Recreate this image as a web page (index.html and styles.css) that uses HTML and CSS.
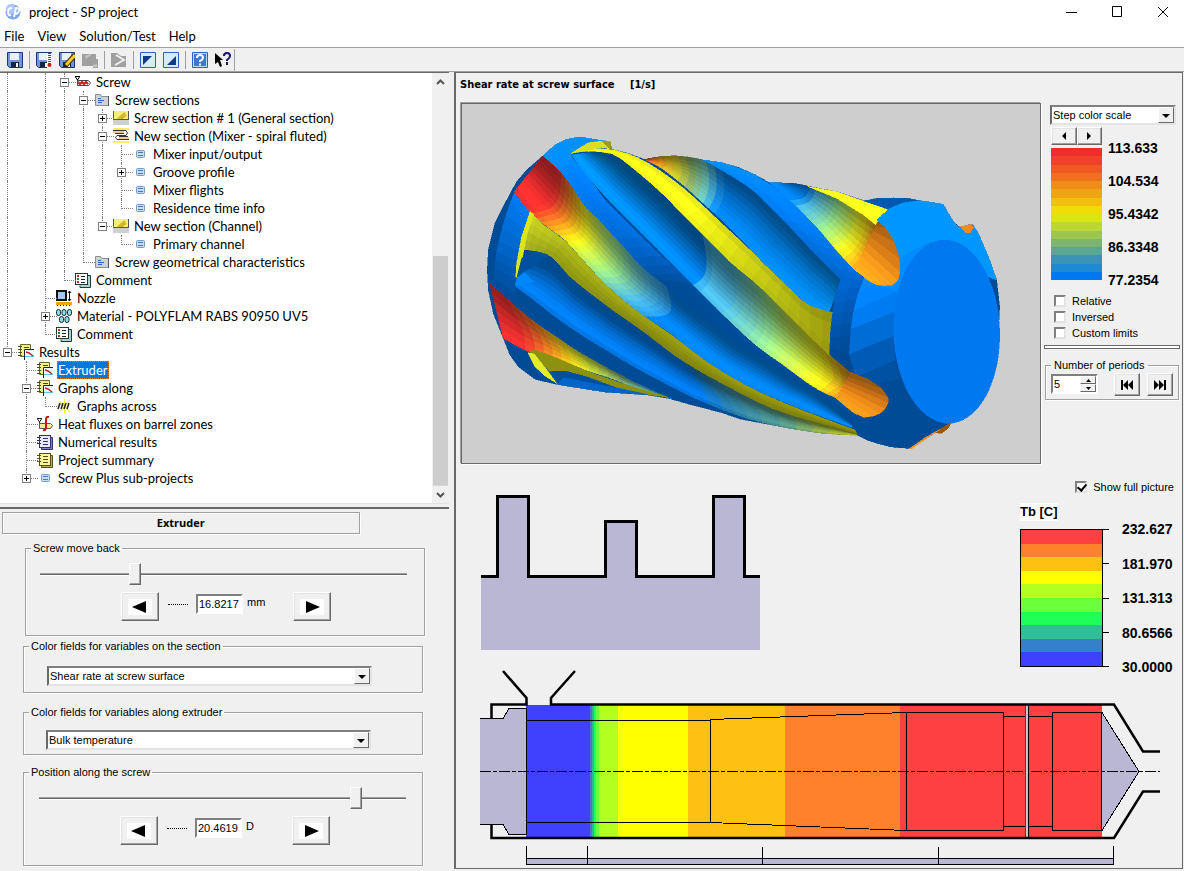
FILE: index.html
```html
<!DOCTYPE html>
<html lang="en">
<head>
<meta charset="utf-8">
<title>project - SP project</title>
<link rel="stylesheet" href="styles.css">
</head>
<body>
<svg class="defs" aria-hidden="true">
  <symbol id="i-screw" viewBox="0 0 16 16"><path d="M0 2.500h5M.5 3l2 3 2-3M2.500 5v6" fill="none" stroke="#000"/><path d="M2.500 6.500h11l2 2.500-2 2.500h-11z" fill="#fff" stroke="#444"/><path d="M3 8l2 2 2-2 2 2 2-2 2 2" fill="none" stroke="#d01818" stroke-width="2"/></symbol>
  <symbol id="i-folder" viewBox="0 0 16 16"><path d="M1.500 2.500h5l1 2h7v9h-13z" fill="#cfd2d6" stroke="#8b8f96"/><path d="M4 6.500h3M4 8.500h6M4 10.500h4" stroke="#2a62c8"/><path d="M14.500 4v10" stroke="#555"/></symbol>
  <symbol id="i-channel" viewBox="0 0 16 16"><path d="M0 10h16v5H0z" fill="#cfcfcf"/><path d="M1 1h14v8H1z" fill="#f4ee72"/><path d="M5 9l7-6M8 9l5-4" stroke="#d2b42a" stroke-width="2"/><path d="M0 9.500h16M.5 1v8M15.500 1v8" stroke="#555" fill="none"/></symbol>
  <symbol id="i-mixer" viewBox="0 0 16 16"><path d="M0 1h16M0 14h16" stroke="#ffee66" stroke-width="2"/><path d="M0 4h11M6 10h10" stroke="#f4c8a0" stroke-width="2"/><path d="M0 2.500h13q3 2.500 0 5H4q-3 2 0 4h12M2 5.500h9M6 8.500h9" fill="none" stroke="#333"/></symbol>
  <symbol id="i-leaf" viewBox="0 0 16 16"><rect x="4.500" y="4.500" width="8" height="7" rx="1" fill="#c5dcf5" stroke="#7d9cbd"/><path d="M6 6.500h5M6 9.500h5" stroke="#4a7ab5"/></symbol>
  <symbol id="i-comment" viewBox="0 0 16 16"><path d="M11 3.500h4.500v12H5v-2" fill="#a9d4cc" stroke="#203838"/><rect x=".5" y="1.500" width="12" height="11" fill="#fff" stroke="#203838"/><path d="M2 4h2M2 10h2" stroke="#c03020" stroke-width="2"/><path d="M2 7h2" stroke="#208030" stroke-width="2"/><path d="M6 4.500h4M6 7.500h4M6 10.500h4" stroke="#222"/></symbol>
  <symbol id="i-nozzle" viewBox="0 0 16 16"><rect x="1" y="1" width="9" height="9" fill="#a8c8f4" stroke="#111" stroke-width="2"/><path d="M13.500 1v10M12 3l1.500-2L15 3M12 9l1.500 2L15 9" fill="none" stroke="#111"/><path d="M0 13.500h16" stroke="#e8a800" stroke-width="3"/><path d="M1 15.500h14" stroke="#222" stroke-dasharray="1 2"/></symbol>
  <symbol id="i-material" viewBox="0 0 16 16"><g fill="#8fe0e4" stroke="#123"><rect x=".5" y="1.500" width="4" height="6" rx="2"/><rect x="6" y="1.500" width="4" height="6" rx="2"/><rect x="11.500" y="1.500" width="4" height="6" rx="2"/><rect x="3.500" y="8.500" width="4" height="6" rx="2"/><rect x="9" y="8.500" width="4" height="6" rx="2"/></g></symbol>
  <symbol id="i-results" viewBox="0 0 16 16"><path d="M2.500.5h10v12h-10z" fill="#f6f08a" stroke="#6a6828"/><path d="M0 2.500h4M0 5.500h4M0 8.500h4M0 11.500h4M6 3.500h5" stroke="#4a4820"/><path d="M6 5h10v11H6z" fill="#e8fbff"/><path d="M6.500 16V5.500H16" fill="none" stroke="#222"/><path d="M7 12.500h9" stroke="#60c8e0"/><path d="M8 8l3 1 4 3" fill="none" stroke="#c02020" stroke-width="1.500"/></symbol>
  <symbol id="i-across" viewBox="0 0 16 16"><path d="M3 15L14 2M3 3l11 11M8.500 1v14" stroke="#f4ee30"/><path d="M2 11l2-6M5 11l2-6M8 11l2-6M11 11l2-6" stroke="#222" stroke-width="1.500"/></symbol>
  <symbol id="i-heat" viewBox="0 0 16 16"><path d="M0 2.500h5M.5 3l2 3 2-3M2.500 6v6" fill="none" stroke="#222"/><path d="M2.500 7.500h11l2 2-2 3h-11z" fill="#f0ea9a" stroke="#555"/><path d="M12 1q-3-1-3 3v7q0 4-3 3" fill="none" stroke="#d01010" stroke-width="2"/></symbol>
  <symbol id="i-note-b" viewBox="0 0 16 16"><path d="M4.500 3.500h11v12h-11z" fill="#8080c8" stroke="#303070"/><rect x="2.500" y="1.500" width="11" height="12" fill="#e8e8ff" stroke="#303070"/><path d="M6 4.500h5M6 7.500h5M6 10.500h5M0 3.500h4M0 6.500h4M0 9.500h4" stroke="#303070"/></symbol>
  <symbol id="i-note-y" viewBox="0 0 16 16"><path d="M4.500 3.500h11v12h-11z" fill="#b8b048" stroke="#55501a"/><rect x="2.500" y="1.500" width="11" height="12" fill="#fbf69a" stroke="#55501a"/><path d="M6 4.500h5M6 7.500h5M6 10.500h5M0 3.500h4M0 6.500h4M0 9.500h4" stroke="#55501a"/></symbol>
  <symbol id="i-disk" viewBox="0 0 16 16"><path d="M.5.5h15v15h-13l-2-2z" fill="#7294d8" stroke="#1c3478"/><path d="M3 1h9v7H3z" fill="#e9effc"/><path d="M4 10h8v5H4z" fill="#15234c"/><path d="M9 11h2v4H9z" fill="#fff"/></symbol>
</svg>

<header class="titlebar">
  <svg class="logo" viewBox="0 0 16 16"><circle cx="8" cy="8" r="7.500" fill="#7fa6ee"/><circle cx="6" cy="5" r="5" fill="#a9c6f8"/><path d="M7 4Q3 4 3 8t3 3M9 13l2-9q4 0 3 3t-4 3" fill="none" stroke="#fff" stroke-width="2"/></svg>
  <h1 class="app-title">project - SP project</h1>
  <div class="win-buttons">
    <button aria-label="Minimize"><svg viewBox="0 0 12 12"><path d="M1 6.500h11" stroke="#000"/></svg></button>
    <button aria-label="Maximize"><svg viewBox="0 0 12 12"><path d="M1.500.5h9v10h-9z" fill="none" stroke="#000"/></svg></button>
    <button aria-label="Close"><svg viewBox="0 0 12 12"><path d="M1 1l10 10M11 1L1 11" stroke="#000"/></svg></button>
  </div>
</header>
<nav class="menubar"><button>File</button><button>View</button><button>Solution/Test</button><button>Help</button></nav>
<div class="toolbar">
  <button aria-label="Save"><svg viewBox="0 0 16 16"><use href="#i-disk"/></svg></button>
  <i class="sep"></i>
  <button aria-label="Save temperature"><svg viewBox="0 0 16 16"><use href="#i-disk"/><path d="M11 1h5v15h-5z" fill="#fff"/><path d="M13.500 1v11" stroke="#c02020" stroke-dasharray="1 1" stroke-width="3"/><circle cx="13.500" cy="13" r="2" fill="#d01818"/></svg></button>
  <button aria-label="Save and edit"><svg viewBox="0 0 16 16"><use href="#i-disk"/><path d="M6 14L16 3" stroke="#3a2a00" stroke-width="5"/><path d="M7 13L16 3" stroke="#f6cc20" stroke-width="3"/></svg></button>
  <button aria-label="Export" disabled><svg viewBox="0 0 16 16"><path d="M0 2h14v5h2v9h-5v-2H0z" fill="#a0a0a0"/><path d="M3 4l5-2h2l-6 5zM11 13l4-1v3h-4z" fill="#c4c4c4"/></svg></button>
  <i class="sep"></i>
  <button aria-label="Run" disabled><svg viewBox="0 0 16 16"><path d="M0 1h6l4 3h5v11H0z" fill="#a0a0a0"/><path d="M5 3l8 5-9 5" fill="none" stroke="#f0f0f0" stroke-width="2"/></svg></button>
  <i class="sep"></i>
  <button aria-label="Back view"><svg viewBox="0 0 16 16"><path d="M.5.5h15v15H.5z" fill="#d4ecff" stroke="#2c62c4"/><path d="M3 4h9L3 13z" fill="#123a8c"/></svg></button>
  <button aria-label="Front view"><svg viewBox="0 0 16 16"><path d="M.5.5h15v15H.5z" fill="#d4ecff" stroke="#2c62c4"/><path d="M13 4v9H4z" fill="#123a8c"/></svg></button>
  <i class="sep"></i>
  <button aria-label="Help"><svg viewBox="0 0 16 16"><path d="M.5.5h15v15H.5z" fill="#bcdcff" stroke="#2c62c4"/><path d="M2 2h12v12H2z" fill="#3c78d0"/><path d="M5 6q0-3 3-3t3 3q0 1.500-3 3v1M8 11.500v2" fill="none" stroke="#fff" stroke-width="2"/></svg></button>
  <button aria-label="Context help"><svg viewBox="0 0 16 16"><path d="M0 1l8 7H5l2 6-2 1-2-5-3 2z" fill="#000"/><path d="M9 4q0-3 3-3t3 3q0 2-3 4v1M12 10v3" fill="none" stroke="#16166c" stroke-width="2"/></svg></button>
  <i class="sep end"></i>
</div>

<main class="main">
  <section class="left">
    <div class="tree-box">
      <div class="tree" role="tree">
        <div class="row"><i class="v"></i><i></i><i class="v"></i><i class="t"><button class="minus" aria-label="Collapse"></button></i><svg><use href="#i-screw"/></svg><span>Screw</span></div>
        <div class="row"><i class="v"></i><i></i><i class="v"></i><i class="v"></i><i class="t"><button class="minus" aria-label="Collapse"></button></i><svg><use href="#i-folder"/></svg><span>Screw sections</span></div>
        <div class="row"><i class="v"></i><i></i><i class="v"></i><i class="v"></i><i class="v"></i><i class="t"><button class="plus" aria-label="Expand"></button></i><svg><use href="#i-channel"/></svg><span>Screw section # 1 (General section)</span></div>
        <div class="row"><i class="v"></i><i></i><i class="v"></i><i class="v"></i><i class="v"></i><i class="t"><button class="minus" aria-label="Collapse"></button></i><svg><use href="#i-mixer"/></svg><span>New section (Mixer - spiral fluted)</span></div>
        <div class="row"><i class="v"></i><i></i><i class="v"></i><i class="v"></i><i class="v"></i><i class="v"></i><i class="t"></i><svg><use href="#i-leaf"/></svg><span>Mixer input/output</span></div>
        <div class="row"><i class="v"></i><i></i><i class="v"></i><i class="v"></i><i class="v"></i><i class="v"></i><i class="t"><button class="plus" aria-label="Expand"></button></i><svg><use href="#i-leaf"/></svg><span>Groove profile</span></div>
        <div class="row"><i class="v"></i><i></i><i class="v"></i><i class="v"></i><i class="v"></i><i class="v"></i><i class="t"></i><svg><use href="#i-leaf"/></svg><span>Mixer flights</span></div>
        <div class="row"><i class="v"></i><i></i><i class="v"></i><i class="v"></i><i class="v"></i><i class="v"></i><i class="l"></i><svg><use href="#i-leaf"/></svg><span>Residence time info</span></div>
        <div class="row"><i class="v"></i><i></i><i class="v"></i><i class="v"></i><i class="v"></i><i class="l"><button class="minus" aria-label="Collapse"></button></i><svg><use href="#i-channel"/></svg><span>New section (Channel)</span></div>
        <div class="row"><i class="v"></i><i></i><i class="v"></i><i class="v"></i><i class="v"></i><i></i><i class="l"></i><svg><use href="#i-leaf"/></svg><span>Primary channel</span></div>
        <div class="row"><i class="v"></i><i></i><i class="v"></i><i class="v"></i><i class="l"></i><svg><use href="#i-folder"/></svg><span>Screw geometrical characteristics</span></div>
        <div class="row"><i class="v"></i><i></i><i class="v"></i><i class="l"></i><svg><use href="#i-comment"/></svg><span>Comment</span></div>
        <div class="row"><i class="v"></i><i></i><i class="t"></i><svg><use href="#i-nozzle"/></svg><span>Nozzle</span></div>
        <div class="row"><i class="v"></i><i></i><i class="t"><button class="plus" aria-label="Expand"></button></i><svg><use href="#i-material"/></svg><span>Material - POLYFLAM RABS 90950 UV5</span></div>
        <div class="row"><i class="v"></i><i></i><i class="l"></i><svg><use href="#i-comment"/></svg><span>Comment</span></div>
        <div class="row"><i class="l"><button class="minus" aria-label="Collapse"></button></i><svg><use href="#i-results"/></svg><span>Results</span></div>
        <div class="row"><i></i><i class="t"></i><svg><use href="#i-results"/></svg><span class="selected">Extruder</span></div>
        <div class="row"><i></i><i class="t"><button class="minus" aria-label="Collapse"></button></i><svg><use href="#i-results"/></svg><span>Graphs along</span></div>
        <div class="row"><i></i><i class="v"></i><i class="l"></i><svg><use href="#i-across"/></svg><span>Graphs across</span></div>
        <div class="row"><i></i><i class="t"></i><svg><use href="#i-heat"/></svg><span>Heat fluxes on barrel zones</span></div>
        <div class="row"><i></i><i class="t"></i><svg><use href="#i-note-b"/></svg><span>Numerical results</span></div>
        <div class="row"><i></i><i class="t"></i><svg><use href="#i-note-y"/></svg><span>Project summary</span></div>
        <div class="row"><i></i><i class="l"><button class="plus" aria-label="Expand"></button></i><svg><use href="#i-leaf"/></svg><span>Screw Plus sub-projects</span></div>
      </div>
      <div class="scrollbar">
        <button aria-label="Scroll up"><svg viewBox="0 0 9 6"><path d="M1 5l3.500-3.500L8 5" fill="none" stroke="#555" stroke-width="2"/></svg></button>
        <div class="thumb"></div>
        <button aria-label="Scroll down"><svg viewBox="0 0 9 6"><path d="M1 1l3.500 3.500L8 1" fill="none" stroke="#555" stroke-width="2"/></svg></button>
      </div>
    </div>
    <div class="panel">
      <h2 class="panel-title">Extruder</h2>
      <fieldset class="group wide">
        <legend>Screw move back</legend>
        <input class="slider" type="range" min="0" max="100" value="25" aria-label="Screw move back">
        <div class="stepper">
          <button class="step" aria-label="Back"><svg viewBox="0 0 24 16"><path d="M0 0h24v16H0z" fill="#fff"/><path d="M18 2v12L4 8z"/></svg></button>
          <i class="dots"></i>
          <input class="num" type="text" value="16.8217" aria-label="Move back distance"><span class="unit">mm</span>
          <button class="step" aria-label="Forward"><svg viewBox="0 0 24 16"><path d="M0 0h24v16H0z" fill="#fff"/><path d="M6 2v12l14-6z"/></svg></button>
        </div>
      </fieldset>
      <fieldset class="group fields">
        <legend>Color fields for variables on the section</legend>
        <div class="select"><select aria-label="Variable on the section"><option>Shear rate at screw surface</option></select><b></b></div>
      </fieldset>
      <fieldset class="group fields along">
        <legend>Color fields for variables along extruder</legend>
        <div class="select"><select aria-label="Variable along extruder"><option>Bulk temperature</option></select><b></b></div>
      </fieldset>
      <fieldset class="group">
        <legend>Position along the screw</legend>
        <input class="slider" type="range" min="0" max="1000" value="876" aria-label="Position along the screw">
        <div class="stepper">
          <button class="step" aria-label="Back"><svg viewBox="0 0 24 16"><path d="M0 0h24v16H0z" fill="#fff"/><path d="M18 2v12L4 8z"/></svg></button>
          <i class="dots"></i>
          <input class="num" type="text" value="20.4619" aria-label="Position"><span class="unit">D</span>
          <button class="step" aria-label="Forward"><svg viewBox="0 0 24 16"><path d="M0 0h24v16H0z" fill="#fff"/><path d="M6 2v12l14-6z"/></svg></button>
        </div>
      </fieldset>
    </div>
  </section>

  <section class="right">
    <h2 class="plot-title">Shear rate at screw surface <span>[1/s]</span></h2>
    <div class="top">
      <div class="viewport"><svg id="scene" viewBox="462 104 578 359"></svg></div>
      <aside class="side">
        <div class="select scale-select"><select aria-label="Color scale mode"><option>Step color scale</option></select><b></b></div>
        <div class="shear">
          <div class="shear-left">
            <div class="mini"><button aria-label="Fewer steps"><svg viewBox="0 0 8 8"><path d="M6 0v8L2 4z"/></svg></button><button aria-label="More steps"><svg viewBox="0 0 8 8"><path d="M2 0v8l4-4z"/></svg></button></div>
            <div class="bar16">
              <i class="s1"></i><i class="s2"></i><i class="s3"></i><i class="s4"></i><i class="s5"></i><i class="s6"></i><i class="s7"></i><i class="s8"></i><i class="s9"></i><i class="s10"></i><i class="s11"></i><i class="s12"></i><i class="s13"></i><i class="s14"></i><i class="s15"></i><i class="s16"></i>
            </div>
          </div>
          <div class="ticks shear-ticks"><span>113.633</span><span>104.534</span><span>95.4342</span><span>86.3348</span><span>77.2354</span></div>
        </div>
        <div class="checks">
          <label><input type="checkbox">Relative</label>
          <label><input type="checkbox">Inversed</label>
          <label><input type="checkbox">Custom limits</label>
        </div>
        <hr>
        <fieldset class="group periods">
          <legend>Number of periods</legend>
          <div class="spin"><input type="text" value="5" aria-label="Number of periods"><div><button aria-label="Increase"><svg viewBox="0 0 5 3"><path d="M0 3h5L2.500 0z"/></svg></button><button aria-label="Decrease"><svg viewBox="0 0 5 3"><path d="M0 0h5L2.500 3z"/></svg></button></div></div>
          <button class="skip" aria-label="First"><svg viewBox="0 0 12 10"><path d="M0 0h2v10H0zM7 0v10L2 5zM12 0v10L7 5z"/></svg></button>
          <button class="skip" aria-label="Last"><svg viewBox="0 0 12 10"><path d="M10 0h2v10h-2zM5 0v10l5-5zM0 0v10l5-5z"/></svg></button>
        </fieldset>
      </aside>
    </div>
    <div class="mid">
      <svg class="profile" viewBox="480 494 282 158"><path d="M481 576h16v-80h32v80h76v-55h32v55h76v-80h32v80h15v74H481z" fill="#b9b7d3"/><path d="M481 576.500h16.500V496.500h31v80h77V521.500h31v55h77V496.500h31v80H760" fill="none" stroke="#000" stroke-width="3"/></svg>
      <div class="temp">
        <label class="full"><input type="checkbox" checked>Show full picture</label>
        <h3>Tb [C]</h3>
        <div class="temp-scale">
          <div class="bar10"><i class="t1"></i><i class="t2"></i><i class="t3"></i><i class="t4"></i><i class="t5"></i><i class="t6"></i><i class="t7"></i><i class="t8"></i><i class="t9"></i><i class="t10"></i></div>
          <div class="marks"><i></i><i></i><i></i><i></i><i></i></div>
          <div class="ticks temp-ticks"><span>232.627</span><span>181.970</span><span>131.313</span><span>80.6566</span><span>30.0000</span></div>
        </div>
      </div>
    </div>
    <svg class="barrel" viewBox="480 670 680 196" shape-rendering="crispEdges">
      <path d="M480 718h23l6-10h17v126h-17l-6-10h-23z" fill="#b9b7d3"/>
      <path d="M526 705h64v132h-64z" fill="#4040ff"/><path d="M590 705h2v132h-2z" fill="#4a76d0"/><path d="M592 705h2v132h-2z" fill="#2cb89c"/><path d="M594 705h2v132h-2z" fill="#20ff58"/><path d="M596 705h3v132h-3z" fill="#6cff3c"/><path d="M599 705h19v132h-19z" fill="#b2ff20"/><path d="M618 705h70v132h-70z" fill="#ffff00"/><path d="M688 705h97v132h-97z" fill="#ffc014"/><path d="M785 705h115v132H785z" fill="#ff812c"/><path d="M900 705h202v132H900z" fill="#ff4040"/>
      <path d="M1102 712l37 59-37 59z" fill="#b9b7d3"/>
      <g fill="none" stroke="#000"><path d="M480 718.500h23l6-10h17.500v126H509l-6-10h-23M526 720.500h184.500v102H526M710 719.500l196-7M710 822.500l196 8M906.500 712.500h97v118h-97zM1003 716.500h49M1003 826.500h49M1052.500 712.500h49v118h-49zM1102 712.500l37 59-37 59"/><path d="M480 771.500h680" stroke-dasharray="11 2 4 2"/></g>
      <path d="M1025 705h1v132h-1z" fill="#b01818"/><path d="M1026 705h2v132h-2z" fill="#d0c8c0"/><path d="M1028 705h1v132h-1z" fill="#000"/>
      <g fill="none" stroke="#000" stroke-width="3" shape-rendering="auto"><path d="M503 671l23.500 27v6.500h-35V719M575 671l-24 27v6.500h563l29 47h17M491.500 824v14H1114l29-46.500h17" stroke-width="2.500"/></g>
      <path d="M526 858h587v6H526z" fill="#b9b7d3"/><path d="M526 858.500h587.500v6H526.500V846M587.500 846v18M762.500 847v17M938.500 847v17M1113.500 846v18" fill="none" stroke="#000"/>
    </svg>
  </section>
</main>
<script src="scene.js"></script>
</body>
</html>
```
FILE: styles.css
```css
* { box-sizing: border-box; }
html, body { height: 100%; }
body { margin: 0; display: flex; flex-direction: column; background: #f0f0f0; color: #000; font: 11px "Liberation Sans", sans-serif; }
button, input, select { font: inherit; color: inherit; margin: 0; padding: 0; border-radius: 0; }
h1, h2, h3 { margin: 0; font-size: inherit; }
.defs { position: absolute; width: 0; height: 0; }

.titlebar { display: flex; align-items: center; height: 24px; padding: 0 0 0 5px; background: #fff; flex: none; }
.logo { width: 16px; height: 16px; margin-right: 8px; }
.app-title { flex: 1; font: 13px/24px Lato, "Noto Sans", sans-serif; }
.win-buttons { display: flex; gap: 4px; }
.win-buttons button { width: 42px; height: 24px; border: 0; background: none; display: grid; place-items: center; }
.win-buttons svg { width: 12px; height: 12px; }
.menubar { display: flex; gap: 13px; height: 23px; padding: 1px 0 0 4px; background: #fff; flex: none; }
.menubar button { border: 0; background: none; font: 13px/22px Lato, "Noto Sans", sans-serif; }

.toolbar { display: flex; align-items: center; height: 25px; border-top: 1px solid #a0a0a0; border-bottom: 1px solid #a0a0a0; padding-left: 3px; flex: none; background: #f0f0f0; }
.toolbar button { width: 23px; height: 22px; border: 0; background: none; display: grid; place-items: center; }
.toolbar svg { width: 16px; height: 16px; }
.sep { width: 1px; height: 18px; margin: 0 2px 0 3px; background: #a0a0a0; }
.sep.end { height: 22px; margin: 0; }

.main { flex: 1; min-height: 0; display: grid; grid-template-columns: 450fr 734fr; }
.left { display: flex; flex-direction: column; min-width: 0; }
.tree-box { flex: 1; min-height: 0; display: flex; background: #fff; border-top: 1px solid #696969; margin-right: 1px; border-bottom: 1px solid #e3e3e3; }
.tree { flex: 1; overflow: hidden; font: 13px Lato, "Noto Sans", sans-serif; }
.row { display: flex; align-items: center; height: 18px; white-space: nowrap; }
.row i { position: relative; width: 19px; height: 18px; flex: none; }
.row i.v::before, .row i.t::before, .row i.l::before { content: ""; position: absolute; left: 7px; top: 0; bottom: 0; border-left: 1px dotted #808080; }
.row i.l::before { bottom: 8px; }
.row i.t::after, .row i.l::after { content: ""; position: absolute; left: 8px; right: 0; top: 9px; border-top: 1px dotted #808080; }
.row button { position: absolute; z-index: 1; left: 3px; top: 5px; width: 9px; height: 9px; border: 1px solid #808080; background: linear-gradient(#000, #000) center / 5px 1px no-repeat #fff; }
.row button.plus { background: linear-gradient(#000, #000) center / 5px 1px no-repeat, linear-gradient(#000, #000) center / 1px 5px no-repeat #fff; }
.row svg { width: 16px; height: 16px; margin: 0 4px 0 -1px; flex: none; }
.row span { padding: 0 1px; height: 18px; line-height: 18px; }
.row .selected { background: #0078d7; color: #fff; outline: 1px dotted #d77a20; outline-offset: -1px; }
.scrollbar { width: 17px; background: #f0f0f0; display: flex; flex-direction: column; }
.scrollbar button { height: 17px; border: 0; background: none; display: grid; place-items: center; flex: none; }
.scrollbar svg { width: 9px; height: 6px; }
.scrollbar .thumb { flex: 1; margin-left: 1px; margin-right: 1px; background: linear-gradient(#cdcdcd, #cdcdcd) bottom / 100% 58% no-repeat; }

.panel { margin: 3px 1px 0 0; border-top: 2px solid #696969; padding: 3px 0 5px 2px; flex: none; }
.panel-title { width: 80%; height: 22px; border: 1px solid #a0a0a0; box-shadow: 1px 1px #fff, inset 1px 1px #fff; text-align: center; font: bold 11px/20px "Open Sans", "Noto Sans", sans-serif; }
.group { margin: 6px 26px 0 21px; padding: 0 16px 0 15px; min-width: 0; height: 101px; border: 1px solid #a0a0a0; box-shadow: 1px 1px #fff, inset 1px 1px #fff; }
.group legend { margin-left: -10px; padding: 0 2px; height: 14px; font: 11px/14px "Liberation Sans", sans-serif; }
.group.wide { margin: 7px 24px 0 23px; height: 95px; padding: 0 17px 0 14px; }
.group.wide legend { margin-left: -9px; }
.fields { height: 54px; margin-top: 3px; padding: 13px 50px 0 23px; }
.fields legend { margin-left: -18px; }
.fields.along { height: 50px; margin-top: 12px; padding: 11px 51px 0 22px; }
.fields.along legend { margin-left: -17px; }
.fields.along + .group { margin-top: 10px; }
.slider { display: block; appearance: none; -webkit-appearance: none; width: 100%; height: 24px; margin: 7px 0 6px; background: linear-gradient(#a0a0a0 0 1px, #696969 1px 2px, #fff 2px 3px) center / 100% 3px no-repeat; }
.slider::-webkit-slider-thumb { -webkit-appearance: none; width: 12px; height: 22px; background: #f0f0f0; border: 1px solid; border-color: #fff #696969 #696969 #fff; box-shadow: inset -1px -1px #a0a0a0; }
.stepper { display: flex; align-items: flex-start; padding-left: 81px; }
.step, .skip, .mini button { background: #f0f0f0; border: 1px solid; border-color: #fff #696969 #696969 #fff; box-shadow: inset -1px -1px #a0a0a0, inset 1px 1px #e3e3e3; display: grid; place-items: center; }
.step { width: 38px; height: 29px; flex: none; }
.step svg { width: 24px; height: 16px; }
.dots { width: 20px; margin: 12px 8px 0 9px; border-top: 1px dotted #000; }
.num { width: 47px; height: 20px; margin-top: 2px; padding-left: 1px; border: 2px solid; border-color: #808080 #fff #fff #808080; background: #fff; }
.unit { width: 50px; padding: 4px 0 0 4px; }
.select { position: relative; height: 20px; background: #fff; border: 2px solid; border-color: #808080 #e3e3e3 #e3e3e3 #696969; }
.select select { display: block; width: 100%; height: 100%; padding-left: 1px; border: 0; background: none; appearance: none; -webkit-appearance: none; font: 11px "Liberation Sans", sans-serif; }
.select b { position: absolute; right: 0; top: 0; bottom: 0; width: 16px; background: #f0f0f0; border: 1px solid; border-color: #fff #696969 #696969 #fff; pointer-events: none; }
.select b::before { content: ""; position: absolute; left: 3px; top: 6px; border: 4px solid transparent; border-top-color: #000; border-bottom: 0; }

.right { display: flex; flex-direction: column; min-width: 0; margin: 0 1px 2px 4px; border: 1px solid #696969; border-left-width: 2px; padding: 0 2px 2px 4px; }
.plot-title { height: 29px; font: bold 11px/23px "DejaVu Sans Condensed", "DejaVu Sans", sans-serif; }
.plot-title span { margin-left: 12px; }
.top { display: flex; gap: 2px; }
.viewport { flex: 1; min-width: 0; margin: 1px; border: 1px solid #696969; box-shadow: -1px -1px #a0a0a0, 1px 1px #fff; background: #cecece; }
.viewport svg { display: block; width: 100%; }
.side { width: 136px; padding-top: 3px; flex: none; }
.side .select { margin: 0 4px 2px 6px; }
.shear { display: flex; gap: 6px; padding-left: 7px; }
.shear-left { width: 51px; }
.mini { display: flex; }
.mini button { flex: 1; height: 18px; }
.mini svg { width: 8px; height: 8px; }
.bar16 { margin-top: 3px; height: 132px; display: grid; grid-template-rows: repeat(16, 1fr); }
.ticks { display: flex; flex-direction: column; justify-content: space-between; font: bold 14px/16px "Liberation Sans", sans-serif; }
.shear-ticks { margin-top: 13px; height: 148px; }
.s1{background:#f02d2d}.s2{background:#f0412a}.s3{background:#f05a22}.s4{background:#f0701e}.s5{background:#f08c18}.s6{background:#f0a514}.s7{background:#f0c00c}.s8{background:#f0dc08}.s9{background:#dae612}.s10{background:#bcd632}.s11{background:#9cc650}.s12{background:#7cb470}.s13{background:#5ca494}.s14{background:#3c94b4}.s15{background:#1e8ad4}.s16{background:#0078f0}
.checks { padding: 5px 0 0 10px; display: flex; flex-direction: column; }
.checks label { display: flex; align-items: center; gap: 6px; height: 16px; }
input[type="checkbox"] { appearance: none; -webkit-appearance: none; position: relative; width: 12px; height: 12px; border: 2px solid; border-color: #808080 #e3e3e3 #e3e3e3 #808080; background: #fff; }
.full input:checked::after { content: ""; position: absolute; left: 2px; top: -1px; width: 4px; height: 7px; border: solid #000; border-width: 0 2px 2px 0; transform: rotate(40deg); }
hr { height: 4px; margin: 4px 0 9px; border: 1px solid #696969; background: #fff; }
.group.periods { margin: 0 1px 0 1px; height: 42px; padding: 1px 4px 0 5px; display: flex; align-items: flex-start; gap: 7px; }
.group.periods legend { margin-left: 0; padding: 0 3px; }
.spin { display: flex; width: 47px; height: 20px; margin-top: 1px; margin-right: 9px; border: 2px solid; border-color: #808080 #fff #fff #808080; background: #fff; }
.spin input { width: 0; flex: 1; border: 0; background: none; padding-left: 1px; }
.spin div { width: 16px; display: flex; flex-direction: column; }
.spin button { flex: 1; min-height: 0; border: 1px solid; border-color: #fff #696969 #696969 #fff; background: #f0f0f0; display: grid; place-items: center; }
.spin svg { width: 5px; height: 3px; }
.skip { width: 26px; height: 23px; flex: none; }
.skip svg { width: 12px; height: 10px; }

.mid { display: flex; justify-content: space-between; align-items: flex-start; padding: 13px 6px 0 20px; }
.profile { width: 282px; flex: 0 1 auto; margin-top: 16px; }
.temp { width: 155px; }
.full { display: flex; align-items: center; justify-content: flex-end; gap: 6px; height: 18px; }
.temp h3 { width: 38px; margin: 7px 0 0 1px; font: bold 13px/18px "Liberation Sans", sans-serif; white-space: nowrap; background: #fff; }
.temp-scale { display: flex; height: 153px; margin: 0 0 -4px 1px; padding: 8px 0 7px; }
.bar10 { width: 83px; border: 1px solid #000; display: grid; grid-template-rows: repeat(10, 1fr); }
.marks { width: 6px; display: flex; flex-direction: column; justify-content: space-between; }
.marks i { height: 1px; background: #000; }
.temp-ticks { margin: -8px 0 -8px 13px; }
.t1{background:#ff4040}.t2{background:#ff812c}.t3{background:#ffc014}.t4{background:#ffff00}.t5{background:#b2ff20}.t6{background:#6cff3c}.t7{background:#20ff58}.t8{background:#2cc094}.t9{background:#3480cc}.t10{background:#4040ff}
.barrel { display: block; margin: 0 20px; }
```
FILE: scene.js
```js
(function () {
  var NS = 'http://www.w3.org/2000/svg';
  var svg = document.getElementById('scene');
  var root = document.createElementNS(NS, 'g');
  root.setAttribute('transform', 'translate(455 90) scale(.33333)');
  root.setAttribute('shape-rendering', 'crispEdges');
  svg.appendChild(root);

  var R = [255, 50, 50], O = [255, 120, 40], A = [255, 190, 28], Y = [255, 255, 28], L = [205, 250, 95],
      G = [160, 245, 145], T = [120, 215, 195], C = [80, 195, 240], D = [45, 170, 255], B = [0, 140, 255], OR = [255, 155, 28];

  function rgb(c, k) { return 'rgb(' + c.map(function (v) { return Math.round(v * k); }).join(',') + ')'; }
  function pairs(s) { return s.trim().split(/\s+/).map(function (p) { return p.split(',').map(Number); }); }
  // points given relative to the head of the mixer
  function head(s) { return pairs(s).map(function (p) { return [p[0] + 855, p[1] + 90]; }); }
  function at(pts, t) {
    var n = pts.length - 1, u = Math.max(0, Math.min(1, t)) * n, i = Math.min(n - 1, Math.floor(u)), f = u - i;
    var a = pts[Math.max(0, i - 1)], b = pts[i], c = pts[i + 1], d = pts[Math.min(n, i + 2)];
    return [0, 1].map(function (k) {
      return 0.5 * (2 * b[k] + (c[k] - a[k]) * f + (2 * a[k] - 5 * b[k] + 4 * c[k] - d[k]) * f * f + (3 * b[k] - a[k] - 3 * c[k] + d[k]) * f * f * f);
    });
  }
  function path(pts, fill) {
    var p = document.createElementNS(NS, 'path');
    p.setAttribute('d', 'M' + pts.map(function (q) { return q[0].toFixed(1) + ' ' + q[1].toFixed(1); }).join('L') + 'Z');
    p.setAttribute('fill', fill); p.setAttribute('stroke', fill); p.setAttribute('stroke-width', 1.5);
    root.appendChild(p);
  }
  function lerp(a, b, k) { return a.map(function (v, i) { return v + (b[i] - v) * k; }); }
  // stops: [position, colour] pairs along the groove; shades: brightness across it
  function patch(left, right, stops, shades, steps, bow) {
    var m = shades.length;
    for (var i = 0; i < steps; i++) {
      var t = (i + 0.5) / steps, k = 0;
      while (k < stops.length - 2 && t > stops[k + 1][0]) k++;
      var s0 = stops[k], s1 = stops[k + 1] || s0;
      var c = lerp(s0[1], s1[1], Math.max(0, Math.min(1, (t - s0[0]) / (s1[0] - s0[0] || 1))));
      for (var j = 0; j < m; j++) {
        var q = [[i, j], [i + 1, j], [i + 1, j + 1], [i, j + 1]].map(function (e) {
          var s = e[1] / m, tt = e[0] === 0 ? 0 : e[0] / steps + bow * Math.sin(Math.PI * s);
          return lerp(at(left, tt), at(right, tt), s);
        });
        path(q, rgb(c, shades[j]));
      }
    }
  }

  // silhouette
  path(pairs('97,540 100,480 120,400 150,340 185,275 215,240 263,198 300,165 335,148 375,141 430,150 466,158 470,178 520,190 570,209 600,202 660,197 745,210 800,218 850,232 900,254 943,278 1015,280 1065,290 1145,305 1230,333 1275,325 1355,325 1395,332 1465,343 1480,370 1495,395 1515,412 1550,402 1570,430 1600,500 1625,570 1634,650 1630,730 1610,820 1575,900 1525,965 1490,995 1365,1075 1305,1070 1240,1052 1205,1035 1105,1030 1005,1015 855,987 800,968 700,942 640,925 580,915 450,906 310,884 240,868 190,830 165,795 145,745 115,670 100,600'), '#004b96');

  // left chamfer
  patch(pairs('178,308 150,385 128,470 120,530 118,590'), pairs('225,365 208,430 193,500 183,560 180,640'), [[0, [0, 125, 245]], [1, [0, 75, 150]]], [1, 1], 9, 0);
  // first land
  patch(pairs('263,198 310,240 350,290 385,345 430,390 500,465 570,540 637,592 740,680 850,765 980,845 1190,1000'),
        pairs('335,148 350,200 400,260 450,330 510,390 580,460 660,535 735,605 800,670 900,765 985,825 1190,960'),
        [[0, [0, 145, 255]], [0.2, [0, 125, 248]], [0.42, [0, 108, 218]], [0.62, [0, 75, 150]], [1, [0, 75, 150]]], [1, 1, 1, 1.02, 1.04], 30, 0);
  path(pairs('263,198 300,165 335,148 375,141 430,150 466,155 440,175 350,190 330,230 300,230'), '#0091ff');

  // lowest groove running along the bottom
  patch(pairs('180,588 230,625 300,680 380,735 450,778 540,832 640,885 720,925 820,966 900,992 1005,1015 1105,1030 1205,1036'),
        pairs('205,495 240,483 290,500 340,555 400,605 480,665 570,728 650,790 720,835 810,885 950,955 1080,995 1205,1030'),
        [[0, [0, 134, 255]], [0.6, [0, 130, 250]], [0.66, [35, 130, 190]], [0.82, [90, 165, 150]], [0.92, [170, 190, 60]], [1, [190, 200, 20]]],
        [0.9, 1, 0.97, 0.9, 0.84, 0.76, 0.66, 0.58, 0.56, 0.56], 26, 0.02);
  // long groove in two parts: coloured entry and blue run-out
  patch(pairs('178,305 220,360 270,405 330,450 385,510 440,570 500,625 570,680 640,725 720,790 800,845 880,890 960,925 1060,965 1190,1012'),
        pairs('263,198 310,240 350,290 385,345 430,390 500,465 570,540 637,592 700,650 780,710 850,765 930,810 1010,865 1090,915 1190,1000'),
        [[0, R], [0.07, R], [0.12, O], [0.17, A], [0.22, Y], [0.28, L], [0.33, G], [0.38, T], [0.43, C], [0.49, D], [0.5, B], [1, B]],
        [0.96, 1, 1, 0.95, 0.88, 0.8, 0.72, 0.64, 0.58, 0.56], 46, 0.045);

  // olive land
  patch(pairs('205,478 240,483 290,500 340,555 400,605 480,665 570,728 650,790 720,835 810,885 950,955 1080,995 1205,1030'),
        pairs('225,365 270,408 330,452 385,512 440,572 510,635 580,688 650,735 720,790 800,845 920,910 1060,968 1200,1020'),
        [[0, [195, 205, 35]], [0.2, [165, 175, 22]], [0.5, [148, 152, 16]], [1, [140, 142, 12]]], [0.9, 0.94, 1, 1.05], 24, 0);
  path(pairs('225,365 236,372 217,430 205,490 187,565 182,562 185,520 200,440'), '#dce61e');
  path(pairs('200,505 240,483 280,495 250,520 205,545 185,565'), '#00509e');
  path(pairs('185,565 210,548 235,575 205,582 182,588'), '#0087fa');

  // lower-left groove
  patch(pairs('145,745 220,785 280,800 340,820 400,843 460,862 520,885 600,912 650,925'),
        pairs('103,577 165,635 240,697 300,738 370,785 450,830 530,872 600,905 650,925'),
        [[0, R], [0.1, R], [0.22, O], [0.34, A], [0.44, [235, 235, 30]], [0.55, [190, 215, 70]], [0.7, [130, 175, 120]], [0.85, C], [1, B]],
        [1, 0.92, 0.84, 0.76, 0.66, 0.6], 18, 0.03);
  path(pairs('222,785 240,780 300,802 400,845 500,880 640,922 560,912 440,885 320,842 285,845'), '#8c9110');
  path(pairs('218,788 238,792 280,845 305,880 270,858 240,830'), '#e6eb28');
  path(pairs('285,845 330,843 400,862 480,892 580,914 450,906 310,884'), '#0064c8');
  path(pairs('285,845 330,843 400,862 480,892 350,866 325,862 310,880'), '#00509e');

  // central groove
  patch(pairs('350,195 390,250 470,340 560,430 650,520 735,605 800,670 900,763 985,825 1075,890 1145,925'),
        pairs('430,183 480,195 540,240 610,300 690,380 760,450 830,520 905,580 985,658 1070,740 1188,847'),
        [[0, [0, 155, 255]], [0.1, [0, 150, 255]], [0.48, B], [0.49, C], [0.58, C], [0.66, T], [0.73, G], [0.8, L], [0.9, Y], [0.96, A], [1, OR]],
        [1, 1.05, 1, 0.92, 0.84, 0.76, 0.68, 0.6, 0.54, 0.5, 0.5], 40, 0.035);

  // far groove at the top
  patch(pairs('570,209 620,235 690,290 745,340 800,390 870,460 930,525 1000,592 1055,640 1095,670 1120,668'),
        pairs('571,208 625,199 690,200 755,215 830,262 900,310 955,365 1010,420 1070,485 1155,565 1150,600'),
        [[0, [240, 70, 40]], [0.06, OR], [0.14, [225, 215, 40]], [0.22, [150, 190, 110]], [0.28, T], [0.34, D], [0.36, B], [1, [0, 150, 255]]],
        [1, 0.98, 0.93, 0.88, 0.82, 0.76, 0.68, 0.6, 0.54], 30, 0.02);
  // yellow land
  patch(pairs('380,184 430,185 480,195 540,240 610,300 690,380 760,450 830,520 905,582 985,660 1060,735 1125,798'),
        pairs('400,176 460,178 530,195 600,232 680,290 745,348 800,400 870,465 940,535 1000,592 1060,645 1135,668'),
        [[0, Y], [0.45, Y], [0.6, [225, 228, 20]], [0.8, [185, 190, 20]], [1, [155, 155, 15]]], [0.97, 1, 1, 0.93], 24, 0);
  path(pairs('348,190 400,158 440,153 467,156 466,178 440,172 390,183'), '#dcdf20');
  path(pairs('440,153 467,156 466,178'), '#a09c18');

  // upper-right land and groove
  patch(pairs('745,210 830,258 900,306 955,361 1010,416 1070,481 1157,568'), pairs('800,218 900,254 1000,325 1060,385 1125,455 1180,515 1228,568'), [[0, [0, 145, 255]], [0.5, [0, 130, 255]], [1, [0, 105, 210]]], [0.97, 1, 1], 12, 0);
  patch(head('88,188 150,240 200,290 240,332 280,380 325,430 350,455'),
        head('160,190 210,200 260,218 300,240 345,270 395,302 412,310'),
        [[0, B], [0.16, B], [0.24, C], [0.38, T], [0.5, G], [0.62, L], [0.72, Y], [0.88, A], [1, OR]],
        [1, 1, 0.95, 0.88, 0.8, 0.72, 0.64, 0.56], 18, 0.05);
  path(head('205,200 290,215 375,245 445,268 425,285 408,315 370,285 290,235'), '#ffff1e');
  path(head('372,243 410,235 460,234 500,235 540,242 490,248 445,268'), '#0058b0');

  // collar and head
  patch(head('302,478 285,540 275,600 270,660 270,705'), head('372,475 352,530 338,590 331,660 333,757'), [[0, [0, 105, 215]], [1, [0, 72, 146]]], [1, 0.97], 7, 0);
  var face = [], i, a;
  for (i = 0; i <= 72; i++) {
    a = i / 72 * Math.PI * 2;
    face.push([1475 + 159 * Math.cos(a) + 6 * Math.sin(a), 725 + 275 * Math.sin(a)]);
  }
  path(head('410,300 450,265 490,248 540,242 610,253 625,280 645,312 662,325 690,338 700,315 715,340 745,410 770,480 600,420 500,600 480,500 478,420 460,370 435,325'), '#0096ff');
  patch(head('372,475 352,530 338,590 331,660 333,757 400,790 440,830 430,870 370,892 340,930 390,962 450,980 510,985'),
        head('560,385 510,450 480,530 463,610 463,700 475,770 490,815 510,850 530,880 550,895 570,905 600,908 640,905'),
        [[0, [0, 138, 255]], [0.15, [0, 130, 255]], [0.35, [0, 85, 170]], [0.45, [0, 75, 150]], [1, [0, 75, 150]]], [1], 14, 0);
  path(head('372,475 430,440 560,370 620,362 520,440 480,520'), '#008cff');
  path(face, '#0078f0');
  // rounded groove ends cut into the chamfer
  patch(head('345,450 412,308'), head('385,482 410,494 432,497 458,495 474,480 480,455 478,415 462,365 435,322 412,306'), [[0, [255, 185, 30]], [0.35, [255, 160, 28]], [0.7, [205, 115, 22]], [1, [145, 85, 14]]], [1], 9, 0);
  patch(head('288,835 333,757'), head('340,878 372,892 400,888 420,880 436,866 445,848 444,832 425,805 385,778 334,757'), [[0, [255, 170, 30]], [0.35, [245, 145, 26]], [0.65, [190, 105, 20]], [0.8, [148, 88, 14]], [1, [148, 88, 14]]], [1], 9, 0);
  path(head('660,321 695,312 700,322 690,338 678,338'), '#eb8c1e');
  path(head('583,938 635,906 625,925 605,940'), '#96580f');
  path(head('508,986 560,950 600,928 560,955 515,986'), '#ff961e');
}());
```
